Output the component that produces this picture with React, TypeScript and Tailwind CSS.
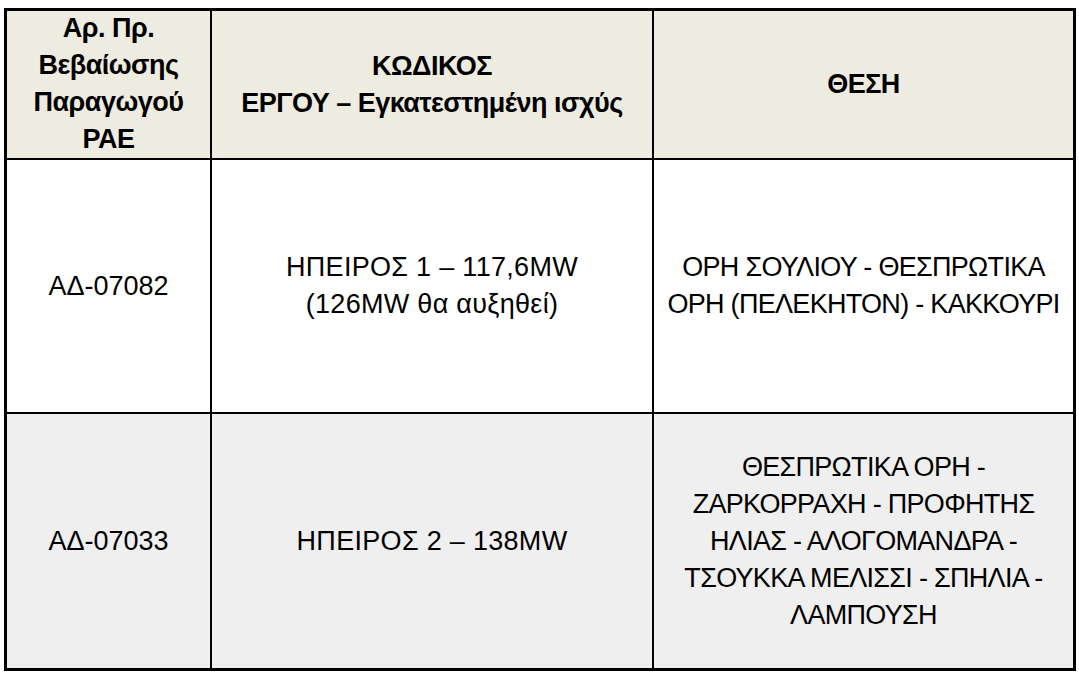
export default function App() {
  const cell = "flex items-center justify-center text-center whitespace-nowrap"
  return (
    <div className="min-h-screen w-[1079px] h-[674px] bg-white pt-[8px] pl-[4px] text-black [font-family:'Liberation_Sans',Arial,sans-serif] text-[27px] leading-[37px]">
      <div className="w-[1072px] border-[3px] border-black grid grid-cols-[205px_442px_419px] grid-rows-[149px_254px_254px]">
        {/* Header */}
        <div className={`${cell} bg-[#eeece1] border-r-2 border-b-2 border-black font-bold tracking-[-0.5px] pb-[2px]`}>
          <div>
            Αρ. Πρ.
            <br />
            Βεβαίωσης
            <br />
            Παραγωγού
            <br />
            ΡΑΕ
          </div>
        </div>
        <div className={`${cell} bg-[#eeece1] border-r-2 border-b-2 border-black font-bold tracking-[-0.5px]`}>
          <div>
            ΚΩΔΙΚΟΣ
            <br />
            ΕΡΓΟΥ – Εγκατεστημένη ισχύς
          </div>
        </div>
        <div className={`${cell} bg-[#eeece1] border-b-2 border-black font-bold tracking-[-0.5px]`}>ΘΕΣΗ</div>

        {/* Row 1 */}
        <div className={`${cell} bg-white border-r-2 border-b-2 border-black`}>ΑΔ-07082</div>
        <div className={`${cell} bg-white border-r-2 border-b-2 border-black tracking-[0.3px]`}>
          <div>
            ΗΠΕΙΡΟΣ 1 – 117,6MW
            <br />
            (126MW θα αυξηθεί)
          </div>
        </div>
        <div className={`${cell} bg-white border-b-2 border-black tracking-[-0.7px]`}>
          <div>
            ΟΡΗ ΣΟΥΛΙΟΥ - ΘΕΣΠΡΩΤΙΚΑ
            <br />
            ΟΡΗ (ΠΕΛΕΚΗΤΟΝ) - ΚΑΚΚΟΥΡΙ
          </div>
        </div>

        {/* Row 2 */}
        <div className={`${cell} bg-[#efefef] border-r-2 border-black`}>ΑΔ-07033</div>
        <div className={`${cell} bg-[#efefef] border-r-2 border-black tracking-[0.3px]`}>ΗΠΕΙΡΟΣ 2 – 138MW</div>
        <div className={`${cell} bg-[#efefef] tracking-[-0.7px]`}>
          <div>
            ΘΕΣΠΡΩΤΙΚΑ ΟΡΗ -
            <br />
            ΖΑΡΚΟΡΡΑΧΗ - ΠΡΟΦΗΤΗΣ
            <br />
            ΗΛΙΑΣ - ΑΛΟΓΟΜΑΝΔΡΑ -
            <br />
            ΤΣΟΥΚΚΑ ΜΕΛΙΣΣΙ - ΣΠΗΛΙΑ -
            <br />
            ΛΑΜΠΟΥΣΗ
          </div>
        </div>
      </div>
    </div>
  )
}
